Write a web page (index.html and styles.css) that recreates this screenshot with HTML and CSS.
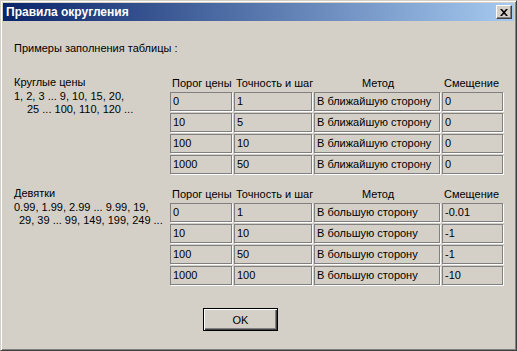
FILE: index.html
```html
<!DOCTYPE html>
<html>
<head>
    <meta charset="utf-8">
    <title>Правила округления</title>
    <link rel="stylesheet" href="styles.css">
</head>
<body>
    <div class="window">
        <div class="titleBar">
            <span class="titleText">Правила округления</span>
            <div class="closeButton">
                <svg width="8" height="7" viewBox="0 0 8 7">
                    <path d="M0 0h2l2 2.2 2-2.2h2l-3 3.5 3 3.5h-2l-2-2.2-2 2.2h-2l3-3.5z" fill="#000"/>
                </svg>
            </div>
        </div>

        <div class="content">
            <p class="intro">Примеры заполнения таблицы :</p>

            <div class="section">
                <div class="sectionText">
                    <p>Круглые цены</p>
                    <p>1, 2, 3 ... 9, 10, 15, 20,</p>
                    <p class="indentWide">25 ... 100, 110, 120 ...</p>
                </div>
                <div class="grid">
                    <div class="head">Порог цены</div>
                    <div class="head">Точность и шаг</div>
                    <div class="head center">Метод</div>
                    <div class="head">Смещение</div>

                    <div class="cell">0</div><div class="cell">1</div><div class="cell">В ближайшую сторону</div><div class="cell">0</div>
                    <div class="cell">10</div><div class="cell">5</div><div class="cell">В ближайшую сторону</div><div class="cell">0</div>
                    <div class="cell">100</div><div class="cell">10</div><div class="cell">В ближайшую сторону</div><div class="cell">0</div>
                    <div class="cell">1000</div><div class="cell">50</div><div class="cell">В ближайшую сторону</div><div class="cell">0</div>
                </div>
            </div>

            <div class="section second">
                <div class="sectionText">
                    <p>Девятки</p>
                    <p>0.99, 1.99, 2.99 ... 9.99, 19,</p>
                    <p class="indentNarrow">29, 39 ... 99, 149, 199, 249 ...</p>
                </div>
                <div class="grid">
                    <div class="head">Порог цены</div>
                    <div class="head">Точность и шаг</div>
                    <div class="head center">Метод</div>
                    <div class="head">Смещение</div>

                    <div class="cell">0</div><div class="cell">1</div><div class="cell">В большую сторону</div><div class="cell">-0.01</div>
                    <div class="cell">10</div><div class="cell">10</div><div class="cell">В большую сторону</div><div class="cell">-1</div>
                    <div class="cell">100</div><div class="cell">50</div><div class="cell">В большую сторону</div><div class="cell">-1</div>
                    <div class="cell">1000</div><div class="cell">100</div><div class="cell">В большую сторону</div><div class="cell">-10</div>
                </div>
            </div>

            <div class="buttonRow">
                <button class="okButton">OK</button>
            </div>
        </div>
    </div>
</body>
</html>
```

FILE: styles.css
```css
body {
    margin: 0;
    padding: 0;
    font-family: "Liberation Sans", Arial, sans-serif;
    font-size: 11px;
    color: #000;
    background-color: #d4d0c8;
}
p {
    margin: 0;
}
.window {
    width: 517px;
    height: 351px;
    box-sizing: border-box;
    background-color: #d4d0c8;
    border: 1px solid;
    border-color: #d4d0c8 #404040 #404040 #d4d0c8;
    box-shadow: inset 1px 1px 0 #fff, inset -1px -1px 0 #808080;
    padding: 2px;
    display: flex;
    flex-direction: column;
}
.titleBar {
    height: 18px;
    flex-shrink: 0;
    background-image: linear-gradient(90deg, #0a246a, #a6caf0);
    display: flex;
    align-items: center;
    justify-content: space-between;
    padding: 0 2px 0 3px;
}
.titleText {
    color: #fff;
    font-weight: bold;
    font-size: 12px;
}
.closeButton {
    width: 16px;
    height: 14px;
    box-sizing: border-box;
    background-color: #d4d0c8;
    border: 1px solid;
    border-color: #fff #404040 #404040 #fff;
    box-shadow: inset -1px -1px 0 #808080;
    display: flex;
    align-items: center;
    justify-content: center;
}
.content {
    padding: 21px 0 0 11px;
}
.intro {
    line-height: 13px;
}
.section {
    display: flex;
    margin-top: 21px;
}
.section.second {
    margin-top: 13px;
}
.sectionText {
    width: 156px;
    flex-shrink: 0;
    line-height: 13.5px;
    margin-top: 0;
}
.indentWide {
    padding-left: 13px;
}
.indentNarrow {
    padding-left: 5px;
}
.grid {
    display: grid;
    grid-template-columns: 62px 78px 126px 61px;
    grid-template-rows: 14px repeat(4, 19px);
    column-gap: 2px;
    row-gap: 2px;
}
.head {
    line-height: 14px;
    padding-left: 2px;
    white-space: nowrap;
}
.head.center {
    text-align: center;
}
.cell {
    border: 1px solid #808080;
    box-shadow: 1px 1px 0 #fff;
    padding-left: 2px;
    line-height: 17px;
    white-space: nowrap;
}
.buttonRow {
    margin-top: 23px;
    padding-left: 189px;
}
.okButton {
    width: 75px;
    height: 23px;
    font-family: "Liberation Sans", Arial, sans-serif;
    font-size: 11px;
    background-color: #d4d0c8;
    border: 1px solid #000;
    box-shadow: inset 1px 1px 0 #fff, inset -1px -1px 0 #404040, inset -2px -2px 0 #808080;
    padding: 0;
}
```
